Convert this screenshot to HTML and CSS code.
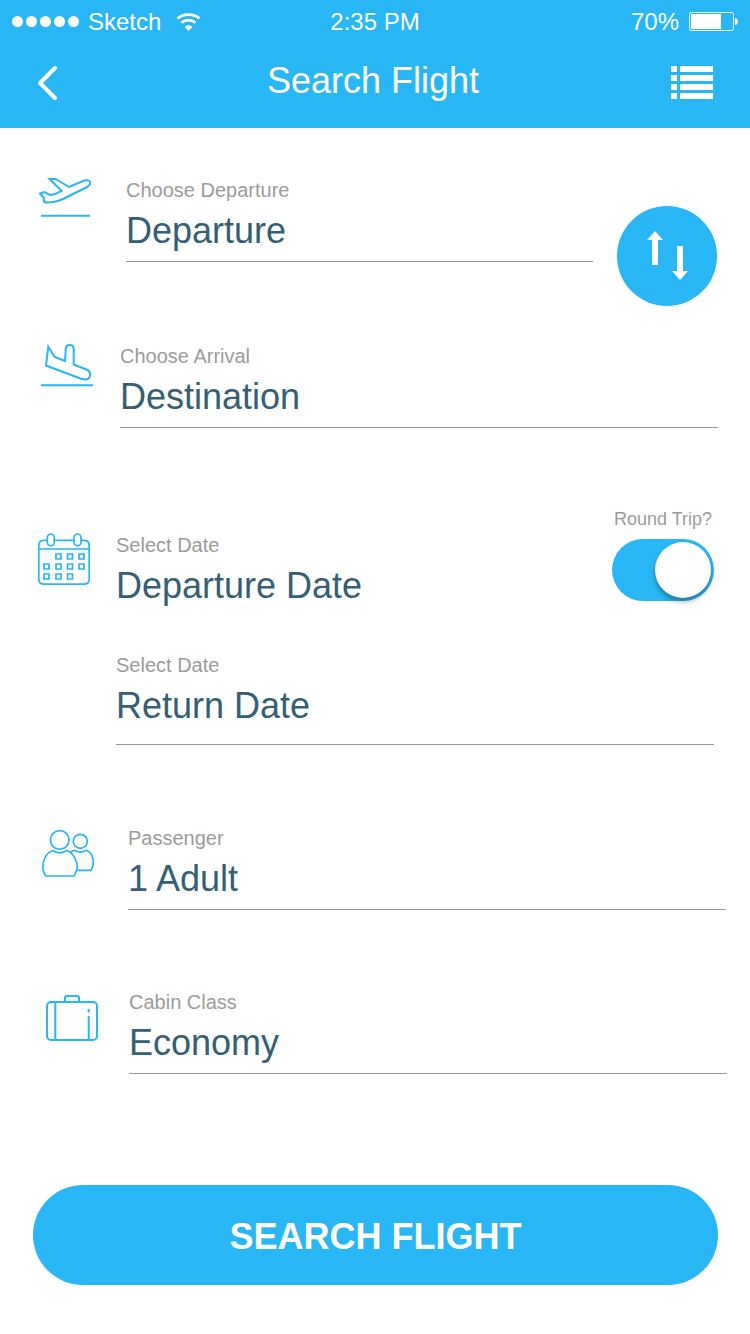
FILE: index.html
```html
<!DOCTYPE html>
<html lang="en">
<head>
    <meta charset="UTF-8">
    <meta name="viewport" content="width=device-width, initial-scale=1.0">
    <title>Search Flight</title>
    <link rel="stylesheet" href="styles.css">
</head>
<body>
    <header class="header">
        <div class="status-bar">
            <div class="status-left">
                <div class="signal">
                    <span></span><span></span><span></span><span></span><span></span>
                </div>
                <span class="carrier">Sketch</span>
                <svg class="wifi" width="24" height="18" viewBox="0 0 24 18" fill="none" stroke="#fff" stroke-width="2.700">
                    <path d="M1.500 5.500C7 .2 18 .2 23.500 5.500"/>
                    <path d="M5.500 9.700C9.500 6.300 15.500 6.300 19.500 9.700"/>
                    <path d="M12.500 18L8.700 14C10.500 11.600 14.500 11.600 16.300 14Z" fill="#fff" stroke="none"/>
                </svg>
            </div>
            <span>2:35 PM</span>
            <div class="status-right">
                <span class="percent">70%</span>
                <svg width="49" height="19" viewBox="0 0 49 19">
                    <rect x="0.5" y="0.5" width="44" height="18" rx="2" fill="none" stroke="#fff"/>
                    <rect x="2" y="2" width="30" height="15" fill="#fff"/>
                    <path d="M46 6C50 6 50 13 46 13Z" fill="#fff"/>
                </svg>
            </div>
        </div>

        <nav class="nav">
            <button type="button" class="icon-button back-button" aria-label="Back">
                <svg width="22" height="36" viewBox="0 0 22 36" fill="none" stroke="#fff" stroke-width="4" stroke-linecap="round" stroke-linejoin="round">
                    <path d="M18 4L3 19L18 34"/>
                </svg>
            </button>
            <h1>Search Flight</h1>
            <button type="button" class="icon-button menu-button" aria-label="Menu">
                <svg width="42" height="33" viewBox="0 0 42 33" fill="#fff">
                    <path d="M0 0h6v6H0zM9 0h33v6H9zM0 9h6v6H0zM9 9h33v6H9zM0 18h6v6H0zM9 18h33v6H9zM0 27h6v6H0zM9 27h33v6H9z"/>
                </svg>
            </button>
        </nav>
    </header>

    <form class="search-form">
        <div class="row row-departure">
            <svg class="icon" viewBox="0 0 52 52">
                <path d="M10.500 1H16.500L30 9L44 3C47 1.700 50.500 2 51 4C51.500 6 50.500 7.700 48 9L25 20.500C19 23.500 13 24.500 8 24.500C5 24.500 4 23 5 20L1 15.500L5.500 14L11 17C15 16.500 19 15 22.500 12.800Z"/>
                <path d="M2 37.700H51"/>
            </svg>
            <div class="field">
                <label for="departure">Choose Departure</label>
                <input type="text" id="departure" placeholder="Departure">
            </div>
            <button type="button" class="swap-button" aria-label="Swap departure and destination">
                <svg width="40" height="50" viewBox="0 0 40 50" fill="#fff">
                    <path d="M8 0L16 9H11V34H5V9H0Z"/>
                    <path d="M30 15H36V40H41L33 49L25 40H30Z"/>
                </svg>
            </button>
        </div>

        <div class="row row-arrival">
            <svg class="icon" viewBox="0 0 52 52">
                <path d="M7.300 2.700L13.700 13L24 17L24.700 5C25 -0.300 32.700 -0.300 32.700 5V20.500L45.500 25.500C51.500 28 49.500 36.500 43.500 35.500L40 34.700L5 21.500Z"/>
                <path d="M0 41.300H52"/>
            </svg>
            <div class="field">
                <label for="arrival">Choose Arrival</label>
                <input type="text" id="arrival" placeholder="Destination">
            </div>
        </div>

        <div class="row row-dates">
            <svg class="icon icon-thin calendar" viewBox="0 0 52 52">
                <path d="M9.300 7.300H6Q.8 7.300 .8 12.500V46Q.8 51.200 6 51.200H46Q51.200 51.200 51.200 46V12.500Q51.200 7.300 46 7.300H43M16.300 7.300H36M.8 16H51.200"/>
                <rect x="9.300" y="1" width="7" height="11.700" rx="3.500"/>
                <rect x="36" y="1" width="7" height="11.700" rx="3.500"/>
                <path d="M18 21h5v5h-5zM29.500 21h5v5h-5zM41 21h5v5h-5zM6 31h5v5H6zM18 31h5v5h-5zM29.500 31h5v5h-5zM41 31h5v5h-5zM6 41h5v5H6zM18 41h5v5h-5zM29.500 41h5v5h-5z"/>
            </svg>
            <div class="dates">
                <div class="dates-top">
                    <div class="field field-plain">
                        <label for="departureDate">Select Date</label>
                        <input type="text" id="departureDate" placeholder="Departure Date">
                    </div>
                    <div class="round-trip">
                        <label for="roundTrip">Round Trip?</label>
                        <input type="checkbox" id="roundTrip" class="toggle" checked>
                    </div>
                </div>
                <div class="field field-return">
                    <label for="returnDate">Select Date</label>
                    <input type="text" id="returnDate" placeholder="Return Date">
                </div>
            </div>
        </div>

        <div class="row row-passenger">
            <svg class="icon icon-thin" viewBox="0 0 52 52">
                <circle cx="17.700" cy="14" r="9.300"/>
                <circle cx="38.300" cy="15.300" r="7"/>
                <path d="M10.700 24.500C15 27.300 20.500 27.300 25 24.500C32 27 37 38 34.500 44.500L32 50H3.500C-1.500 42 1 28 10.700 24.500Z"/>
                <path d="M28.500 26L32 24.300C36 26.500 40.500 26.500 44.500 24.300C51 27 53.500 37 49 44.300H34.500"/>
            </svg>
            <div class="field">
                <label for="passenger">Passenger</label>
                <select id="passenger">
                    <option>1 Adult</option>
                    <option>2 Adults</option>
                    <option>3 Adults</option>
                </select>
            </div>
        </div>

        <div class="row row-cabin">
            <svg class="icon" viewBox="0 0 52 52">
                <rect x="1" y="12" width="50" height="38" rx="4"/>
                <path d="M19 12V8Q19 6 21 6H31Q33 6 33 8V12M9.300 12V50M42.700 26V50M42.700 19V22.500"/>
            </svg>
            <div class="field">
                <label for="cabin">Cabin Class</label>
                <select id="cabin">
                    <option>Economy</option>
                    <option>Business</option>
                    <option>First</option>
                </select>
            </div>
        </div>

        <button type="submit" class="search-button">SEARCH FLIGHT</button>
    </form>
</body>
</html>
```
FILE: styles.css
```css
* {
    margin: 0;
    padding: 0;
    box-sizing: border-box;
    font-family: "Liberation Sans", Arial, sans-serif;
}

body {
    background: #fff;
}

svg {
    display: block;
    flex-shrink: 0;
}

button {
    border: none;
    background: none;
    cursor: pointer;
}

/* Header */
.header {
    background: #29b6f4;
    color: #fff;
    padding-bottom: 7px;
}

.status-bar {
    display: grid;
    grid-template-columns: 1fr auto 1fr;
    align-items: center;
    height: 43px;
    padding: 0 12px;
    font-size: 24px;
    line-height: 28px;
}

.status-left,
.status-right {
    display: flex;
    align-items: center;
}

.status-right {
    justify-content: flex-end;
    gap: 10px;
}

.signal {
    display: flex;
    gap: 3px;
    margin-right: 9px;
}

.signal span {
    width: 11px;
    height: 11px;
    border-radius: 50%;
    background: #fff;
}

.wifi {
    margin-left: 15px;
}

.nav {
    display: grid;
    grid-template-columns: 1fr auto 1fr;
    align-items: center;
    height: 78px;
    padding: 0 37px 0 33px;
}

.nav h1 {
    font-size: 36px;
    font-weight: normal;
    line-height: 44px;
    padding-bottom: 2px;
}

.back-button {
    justify-self: start;
    margin-left: 4px;
}

.menu-button {
    justify-self: end;
}

/* Form */
.search-form {
    padding: 50px 0;
}

.row {
    display: flex;
    align-items: flex-start;
}

.icon {
    width: 52px;
    height: 52px;
    fill: none;
    stroke: #29b6f4;
    stroke-width: 2;
}

.icon-thin {
    stroke-width: 1.7;
}

.field {
    flex: 1;
    min-width: 0;
}

.field label {
    display: block;
    font-size: 20px;
    line-height: 24px;
    color: #9b9b9b;
}

.field input,
.field select {
    display: block;
    width: 100%;
    height: 53px;
    margin-top: 7px;
    padding-bottom: 8px;
    border: none;
    border-bottom: 1px solid #979797;
    border-radius: 0;
    outline: none;
    background: none;
    appearance: none;
    font-size: 36px;
    line-height: 44px;
    color: #355f74;
}

.field input::placeholder {
    color: #355f74;
    opacity: 1;
}

.row-departure {
    gap: 24px;
    padding: 0 33px 0 39px;
}

.row-departure .icon {
    margin-right: 11px;
}

.swap-button {
    display: flex;
    align-items: center;
    justify-content: center;
    flex-shrink: 0;
    width: 100px;
    height: 100px;
    margin-top: 28px;
    border-radius: 50%;
    background: #29b6f4;
}

.swap-button svg {
    overflow: visible;
}

.row-arrival {
    gap: 27px;
    margin-top: 38px;
    padding: 0 32px 0 41px;
}

.row-dates {
    gap: 26px;
    margin-top: 81px;
    padding: 0 36px 0 38px;
}

.calendar {
    margin-top: 24px;
}

.dates {
    flex: 1;
}

.dates-top {
    display: flex;
    align-items: flex-start;
}

.field-plain {
    margin-top: 24px;
}

.field-plain input {
    height: 44px;
    padding-bottom: 0;
    border-bottom: none;
}

.field-return {
    margin-top: 45px;
}

.field-return input {
    height: 61px;
    padding-bottom: 16px;
}

.round-trip {
    display: flex;
    flex-direction: column;
    align-items: center;
    gap: 10px;
}

.round-trip label {
    font-size: 18px;
    line-height: 20px;
    color: #9b9b9b;
}

.toggle {
    display: flex;
    justify-content: flex-end;
    width: 102px;
    height: 62px;
    padding: 3px;
    border-radius: 31px;
    background: #29b6f4;
    appearance: none;
    cursor: pointer;
}

.toggle::before {
    content: "";
    width: 56px;
    height: 56px;
    border-radius: 50%;
    background: #fff;
    box-shadow: 0 4px 5px rgba(0, 0, 0, 0.3);
}

.toggle:not(:checked) {
    justify-content: flex-start;
    background: #ccc;
}

.row-passenger {
    gap: 34px;
    margin-top: 81px;
    padding: 0 24px 0 42px;
}

.row-cabin {
    gap: 31px;
    margin-top: 80px;
    padding: 0 23px 0 46px;
}

.search-button {
    display: block;
    width: calc(100% - 65px);
    height: 100px;
    margin: 111px 32px 0 33px;
    padding-top: 4px;
    border-radius: 50px;
    background: #29b6f4;
    color: #fff;
    font-size: 36px;
    font-weight: bold;
}
```
